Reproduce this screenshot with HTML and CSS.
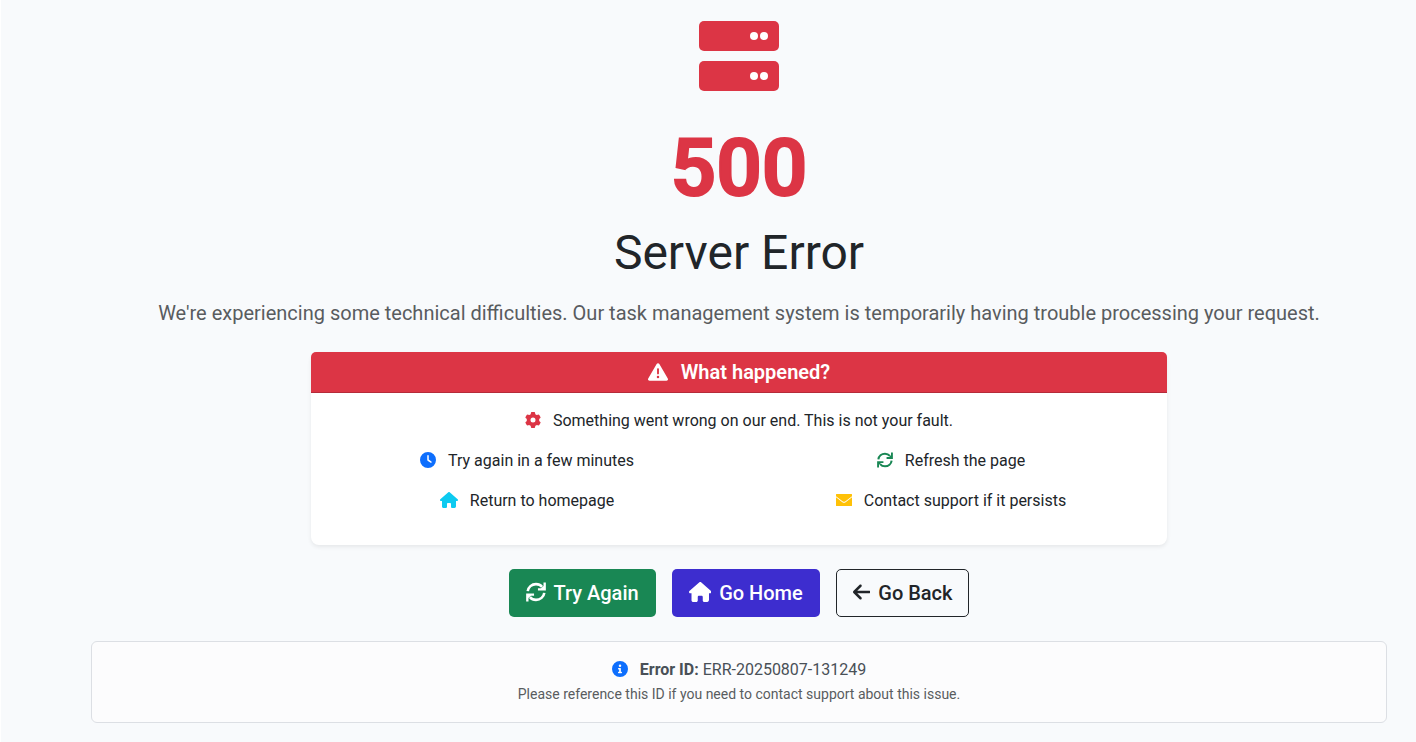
FILE: index.html
```html
<!DOCTYPE html>
<html lang="en">
<head>
<meta charset="utf-8">
<meta name="viewport" content="width=device-width, initial-scale=1">
<title>500 - Server Error</title>
<link rel="stylesheet" href="styles.css">
</head>
<body>
<svg class="sprite" aria-hidden="true">
  <symbol id="refresh" viewBox="0 0 512 512"><g fill="none" stroke="currentColor" stroke-width="66"><path d="M44 236C56 132 146 54 256 54C322 54 376 82 412 126"/><path d="M468 276C456 380 366 458 256 458C190 458 136 430 100 386"/></g><path d="M448 14h60v206H306v-60h78l64-56zM64 498H4V292h202v60h-78l-64 56z"/></symbol>
  <symbol id="house" viewBox="0 0 576 512"><path d="M575.800 255.500c0 18-15 32.100-32 32.100h-32l.7 160.200c0 35.300-19.500 64.200-48 64.200H392c-22.100 0-40-17.900-40-40v-88c0-17.700-14.300-32-32-32h-64c-17.700 0-32 14.300-32 32v88c0 22.100-17.900 40-40 40h-72c-26.500 0-48-21.500-48-48V287.600H32c-18 0-32-14-32-32.100c0-9 3-17 10-24L266.400 8c7-7 15-8 22-8s15 2 21 7L564.800 231.500c8 7 12 15 11 24z"/></symbol>
  <symbol id="warning" viewBox="0 0 512 512"><path fill-rule="evenodd" d="M256 32c14.200 0 27.300 7.500 34.500 19.800l216 368c7.300 12.400 7.300 27.700 .2 40.100S486.300 480 472 480H40c-14.300 0-27.600-7.700-34.700-20.100s-7-27.800 .2-40.100l216-368C228.700 39.500 241.800 32 256 32zm0 128c-13.300 0-24 10.700-24 24v112c0 13.300 10.700 24 24 24s24-10.700 24-24V184c0-13.300-10.700-24-24-24zm32 224a32 32 0 1 0-64 0a32 32 0 1 0 64 0z"/></symbol>
  <symbol id="gear" viewBox="0 0 512 512"><path fill-rule="evenodd" d="M195 8C215-3 297-3 317 8L331 70C348 77 363 86 377 97L438 78C459 91 500 161 500 184L453 227C456 246 456 266 453 285L500 328C500 351 459 421 438 434L377 415C363 426 348 435 331 442L317 504C297 515 215 515 195 504L181 442C164 435 149 426 135 415L74 434C53 421 12 351 12 328L59 285C56 266 56 246 59 227L12 184C12 161 53 91 74 78L135 97C149 86 164 77 181 70zM256 176a80 80 0 1 0 0 160a80 80 0 1 0 0-160z"/></symbol>
  <symbol id="clock" viewBox="0 0 512 512"><path fill-rule="evenodd" d="M256 0a256 256 0 1 1 0 512A256 256 0 1 1 256 0zM232 120V256c0 8 4 15.500 10.700 20l96 64c11 7.400 25.900 4.400 33.300-6.700s4.400-25.900-6.700-33.300L280 243.200V120c0-13.300-10.700-24-24-24s-24 10.700-24 24z"/></symbol>
  <symbol id="mail" viewBox="0 0 512 512"><path d="M16 64H496Q512 64 512 80V132L294 300Q256 326 218 300L0 132V80Q0 64 16 64zM0 166L204 324Q256 358 308 324L512 166V432Q512 448 496 448H16Q0 448 0 432z"/></symbol>
  <symbol id="arrow" viewBox="0 0 448 512"><path d="M9.400 233.400c-12.500 12.500-12.500 32.800 0 45.300l160 160c12.500 12.500 32.800 12.500 45.300 0s12.500-32.800 0-45.300L109.200 288H416c17.700 0 32-14.300 32-32s-14.300-32-32-32H109.200L214.600 118.600c12.500-12.500 12.500-32.800 0-45.300s-32.800-12.500-45.300 0z"/></symbol>
  <symbol id="info" viewBox="0 0 512 512"><path fill-rule="evenodd" d="M256 512A256 256 0 1 0 256 0a256 256 0 1 0 0 512zM208 344h20V268H208c-9 0-16-7-16-16v-16c0-9 7-16 16-16h60c9 0 16 7 16 16v108h20c9 0 16 7 16 16v16c0 9-7 16-16 16H208c-9 0-16-7-16-16v-16c0-9 7-16 16-16zm48-232a40 40 0 1 1 0 80a40 40 0 1 1 0-80z"/></symbol>
</svg>
<main class="page">
  <div class="container">
    <svg class="server" viewBox="0 0 80 70" aria-hidden="true">
      <rect width="80" height="30" rx="5"/><rect y="40" width="80" height="30" rx="5"/>
      <g class="lights"><circle cx="55" cy="15" r="4"/><circle cx="65" cy="15" r="4"/><circle cx="55" cy="55" r="4"/><circle cx="65" cy="55" r="4"/></g>
    </svg>
    <h1 class="code">500</h1>
    <h2 class="title">Server Error</h2>
    <p class="lead">We're experiencing some technical difficulties. Our task management system is temporarily having trouble processing your request.</p>
    <section class="card">
      <h3 class="card-header"><svg class="icon"><use href="#warning"/></svg>What happened?</h3>
      <div class="card-body">
        <p class="item wide"><svg class="icon red"><use href="#gear"/></svg>Something went wrong on our end. This is not your fault.</p>
        <p class="item"><svg class="icon blue"><use href="#clock"/></svg>Try again in a few minutes</p>
        <p class="item"><svg class="icon green"><use href="#refresh"/></svg>Refresh the page</p>
        <p class="item"><svg class="icon house cyan"><use href="#house"/></svg>Return to homepage</p>
        <p class="item"><svg class="icon yellow"><use href="#mail"/></svg>Contact support if it persists</p>
      </div>
    </section>
    <div class="actions">
      <button class="btn btn-retry" type="button"><svg class="icon"><use href="#refresh"/></svg>Try Again</button>
      <a class="btn btn-home" href="#"><svg class="icon house"><use href="#house"/></svg>Go Home</a>
      <button class="btn btn-back" type="button"><svg class="icon arrow"><use href="#arrow"/></svg>Go Back</button>
    </div>
    <aside class="notice">
      <p class="error-id"><svg class="icon blue"><use href="#info"/></svg><span><strong>Error ID:</strong> ERR-20250807-131249</span></p>
      <p class="hint">Please reference this ID if you need to contact support about this issue.</p>
    </aside>
  </div>
</main>
</body>
</html>
```
FILE: styles.css
```css
*, *::before, *::after { box-sizing: border-box; }
body {
  margin: 0;
  background: #f8fafc;
  color: #212529;
  font: 400 16px/24px Roboto, "Liberation Sans", sans-serif;
}
h1, h2, h3, p { margin: 0; }
.sprite { display: none; }
.page {
  min-height: 100vh;
  padding: 21px 0 19px 61px;
  border-left: 1px solid #fff;
}
.container {
  display: flex;
  flex-direction: column;
  align-items: center;
  max-width: 1320px;
  margin: 0 auto;
  padding: 0 12px;
  text-align: center;
}
.server { width: 80px; height: 70px; margin-bottom: 29px; fill: #dc3545; }
.lights { fill: #fff; }
.code {
  margin-bottom: 8px;
  color: #dc3545;
  font-size: 80px;
  font-weight: 600;
  line-height: 96px;
  -webkit-text-stroke: 2px #dc3545;
}
.title { margin-bottom: 16px; font-size: 48px; font-weight: 400; line-height: 58px; }
.lead { margin-bottom: 24px; color: #595c5f; font-size: 20px; line-height: 30px; }
.icon { flex: none; width: 1em; height: 1em; fill: currentColor; }
.icon.house { width: 1.125em; }
.icon.arrow { width: 0.875em; }
.red { color: #dc3545; }
.blue { color: #0d6efd; }
.green { color: #198754; }
.cyan { color: #0dcaf0; }
.yellow { color: #ffc107; }
.card {
  width: 100%;
  max-width: 856px;
  margin-bottom: 24px;
  border-radius: 8px;
  background: #fff;
  box-shadow: 0 2px 4px rgba(0, 0, 0, 0.075);
}
.card-header {
  display: flex;
  align-items: center;
  justify-content: center;
  gap: 13px;
  padding: 8px 16px;
  border-bottom: 1px solid #b52b3a;
  border-radius: 5px 5px 0 0;
  background: #dc3545;
  color: #fff;
  font-size: 20px;
  font-weight: 600;
}
.card-body {
  display: grid;
  grid-template-columns: 1fr 1fr;
  gap: 16px 0;
  padding: 16px 4px 32px;
}
.item, .error-id { display: flex; align-items: center; justify-content: center; gap: 12px; }
.item .icon, .error-id .icon { margin-bottom: 2px; }
.wide { grid-column: 1 / -1; }
.actions { display: flex; flex-wrap: wrap; justify-content: center; gap: 16px; margin-bottom: 24px; }
.btn {
  display: flex;
  align-items: center;
  gap: 8px;
  padding: 8px 16px;
  border: 1px solid transparent;
  border-radius: 5px;
  color: #fff;
  font: 500 20px/30px Roboto, "Liberation Sans", sans-serif;
  text-decoration: none;
  cursor: pointer;
}
.btn .icon { margin-bottom: 2px; }
.btn-retry { background: #198754; }
.btn-home { background: #3d2dcf; }
.btn-back { border-color: #212529; background: transparent; color: #212529; }
.notice {
  width: 100%;
  padding: 16px;
  border: 1px solid #dcdfe4;
  border-radius: 6px;
  background: #fcfcfd;
  color: #495057;
}
.error-id strong { font-weight: 700; }
.hint { color: #595c5f; font-size: 14px; }
```
